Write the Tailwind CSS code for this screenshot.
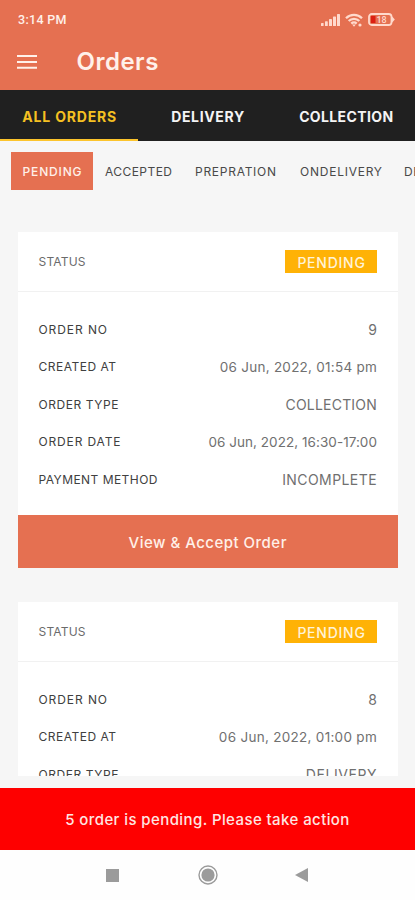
<!DOCTYPE html>
<html lang="en">
<head>
<meta charset="utf-8">
<meta name="viewport" content="width=device-width, initial-scale=1">
<title>Orders</title>
<script src="https://cdn.jsdelivr.net/npm/@tailwindcss/browser@4"></script>
</head>
<body class="bg-white">
<div class="flex h-[900px] w-[415px] flex-col overflow-hidden whitespace-nowrap bg-[#f6f6f6] font-['Inter',sans-serif]">

  <header class="h-[90px] shrink-0 bg-[#e57051] text-[#fff1ea]">
    <div class="flex h-[39px] items-center justify-between pl-[18px] pr-[20px]">
      <span class="pt-[2px] font-['Roboto',sans-serif] text-[12.5px] font-medium tracking-[0.3px]">3:14 PM</span>
      <div class="flex items-center gap-[5px] text-[#ffd9cc]">
        <svg class="h-[13px] w-[19px]" viewBox="0 0 19 13" fill="currentColor">
          <rect x="0" y="10" width="2.6" height="3" rx=".6"/><rect x="4" y="8.3" width="2.8" height="4.7" rx=".6"/><rect x="8" y="6" width="3" height="7" rx=".6"/><rect x="12" y="3.5" width="3" height="9.5" rx=".6"/><rect x="16" y="1" width="3" height="12" rx=".6"/>
        </svg>
        <svg class="h-[14px] w-[18px]" viewBox="0 0 18 14" fill="none" stroke="currentColor" stroke-width="2.3">
          <path d="M1 5.2a11.4 11.4 0 0 1 16 0M3.7 8a7.5 7.5 0 0 1 10.6 0M6.3 10.6a3.9 3.9 0 0 1 5.4 0"/><path d="M7.2 11.6 9 13.8l1.8-2.2z" fill="currentColor" stroke="none"/><circle cx="15" cy="12" r="1.6" fill="currentColor" stroke="none"/>
        </svg>
        <svg class="h-[13px] w-[27px]" viewBox="0 0 27 13">
          <rect x="1" y="1" width="22.5" height="11" rx="2.8" fill="none" stroke="currentColor" stroke-width="1.8"/>
          <path d="M24 3.3 26.8 6.5 24 9.7z" fill="currentColor"/>
          <rect x="3" y="3" width="4.5" height="7" fill="#dc1f12"/>
          <text x="8.5" y="9.8" font-family="Roboto, sans-serif" font-size="9" font-weight="500" fill="currentColor">18</text>
        </svg>
      </div>
    </div>
    <div class="flex h-[46px] items-center pl-[17px]">
      <svg class="h-[14px] w-[20px]" viewBox="0 0 20 14" fill="currentColor"><path d="M0 0h20v2.1H0zM0 5.9h20V8H0zM0 11.7h20v2.1H0z"/></svg>
      <h1 class="ml-[39.5px] text-[24px] font-semibold tracking-[0.5px]">Orders</h1>
    </div>
  </header>

  <nav class="grid h-[51px] shrink-0 grid-cols-3 bg-[#202020] text-[14px] font-bold text-[#f4f4f4]">
    <div class="flex items-center justify-center border-b-2 border-[#fcc42c] pl-px pt-[3px] tracking-[0.83px] text-[#f5c022]">ALL ORDERS</div>
    <div class="flex items-center justify-center pl-px pt-px tracking-[0.65px]">DELIVERY</div>
    <div class="flex items-center justify-center pl-px pt-px tracking-[0.38px]">COLLECTION</div>
  </nav>

  <div class="mt-[11px] flex h-[38px] shrink-0 items-center overflow-hidden pl-[11px] pt-px text-[12px] text-[#494949]">
    <div class="-mt-px flex h-[38px] w-[82px] shrink-0 items-center justify-center bg-[#e57051] pl-px pt-[2px] font-medium tracking-[0.83px] text-[#fff0e9]">PENDING</div>
    <span class="ml-[12px] w-[90px] shrink-0 tracking-[0.44px]">ACCEPTED</span>
    <span class="w-[105px] shrink-0 tracking-[0.73px]">PREPRATION</span>
    <span class="w-[104px] shrink-0 tracking-[0.76px]">ONDELIVERY</span>
    <span class="shrink-0 tracking-[0.7px]">DELIVERED</span>
  </div>

  <main class="mt-[42px] flex h-[544px] shrink-0 flex-col gap-[34px] overflow-hidden pl-[17.5px] pr-[17px]">
    <article class="shrink-0 bg-white">
      <div class="flex h-[60px] items-center justify-between border-b border-[#f1f1f1] px-[21px]">
        <span class="pt-px text-[12px] tracking-[0.2px] text-[#6b6b6b]">STATUS</span>
        <span class="flex h-[23px] w-[92px] items-center justify-center bg-[#ffb206] pl-px pt-px text-[14px] font-medium tracking-[0.75px] text-[#fff3d8]">PENDING</span>
      </div>
      <dl class="flex h-[223px] flex-col px-[21px] pt-[19px] text-[14px] text-[#707070] [&_dt]:text-[12px] [&_dt]:text-[#404040] [&>div]:flex [&>div]:h-[37.5px] [&>div]:items-center [&>div]:justify-between">
        <div><dt class="tracking-[0.92px]">ORDER NO</dt><dd>9</dd></div>
        <div><dt class="tracking-[0.5px]">CREATED AT</dt><dd class="text-[13.5px] tracking-[0.25px]">06 Jun, 2022, 01:54 pm</dd></div>
        <div><dt class="tracking-[0.57px]">ORDER TYPE</dt><dd class="tracking-[0.2px]">COLLECTION</dd></div>
        <div><dt class="tracking-[0.85px]">ORDER DATE</dt><dd class="text-[13.5px] tracking-[0.05px]">06 Jun, 2022, 16:30-17:00</dd></div>
        <div><dt class="tracking-[0.45px]">PAYMENT METHOD</dt><dd class="tracking-[0.42px]">INCOMPLETE</dd></div>
      </dl>
      <button class="flex h-[53px] w-full items-center justify-center bg-[#e57051] pt-[3px] text-[15px] font-medium tracking-[0.49px] text-[#fff0e9]">View &amp; Accept Order</button>
    </article>

    <article class="shrink-0 bg-white">
      <div class="flex h-[60px] items-center justify-between border-b border-[#f1f1f1] px-[21px]">
        <span class="pt-px text-[12px] tracking-[0.2px] text-[#6b6b6b]">STATUS</span>
        <span class="flex h-[23px] w-[92px] items-center justify-center bg-[#ffb206] pl-px pt-px text-[14px] font-medium tracking-[0.75px] text-[#fff3d8]">PENDING</span>
      </div>
      <dl class="flex h-[223px] flex-col px-[21px] pt-[19px] text-[14px] text-[#707070] [&_dt]:text-[12px] [&_dt]:text-[#404040] [&>div]:flex [&>div]:h-[37.5px] [&>div]:items-center [&>div]:justify-between">
        <div><dt class="tracking-[0.92px]">ORDER NO</dt><dd>8</dd></div>
        <div><dt class="tracking-[0.5px]">CREATED AT</dt><dd class="text-[13.5px] tracking-[0.29px]">06 Jun, 2022, 01:00 pm</dd></div>
        <div><dt class="tracking-[0.57px]">ORDER TYPE</dt><dd class="tracking-[0.6px]">DELIVERY</dd></div>
      </dl>
    </article>
  </main>

  <div class="mt-[12px] flex h-[62px] shrink-0 items-center justify-center bg-[#fe0000] pt-[2px] text-[15px] font-medium tracking-[0.41px] text-[#ffe6e2]">5 order is pending. Please take action</div>

  <footer class="flex h-[50px] shrink-0 items-center bg-[#fefefe] pl-[106px] text-[#9b9b9b]">
    <div class="size-[13px] bg-[#9b9b9b]"></div>
    <svg class="ml-[79px] size-[20px]" viewBox="0 0 20 20"><circle cx="10" cy="10" r="9" fill="none" stroke="currentColor" stroke-width="1.4"/><circle cx="10" cy="10" r="6.6" fill="currentColor"/></svg>
    <svg class="ml-[77px] h-[14px] w-[13px]" viewBox="0 0 13 14" fill="currentColor"><path d="M13 0v14L0 7z"/></svg>
  </footer>
</div>
</body>
</html>
